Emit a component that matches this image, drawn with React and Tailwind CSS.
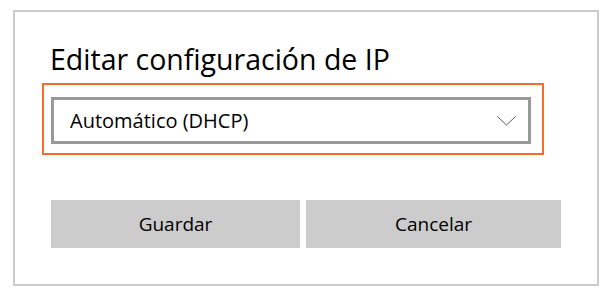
import React from "react";

const font = { fontFamily: '"Open Sans", "Noto Sans", sans-serif' };

const App = () => {
    return (
        <div className="w-[615px] h-[300px] bg-white pt-[10px] pl-[13px] text-black" style={font}>
            {/* Dialog frame */}
            <div className="w-[586px] h-[276px] border-2 border-[#cccccc] flex flex-col">
                <h1 className="ml-[35px] mt-[29px] text-[28.5px] leading-[36px] font-normal whitespace-nowrap">
                    Editar configuración de IP
                </h1>

                {/* Highlighted combo box */}
                <div className="ml-[27px] mt-[6px] w-[502px] h-[72px] border-2 border-[#f76b2d] pl-[7px] pt-[12px]">
                    <div className="w-[480px] h-[47px] border-[3px] border-[#999999] flex items-center justify-between pl-[16px] pr-[12px]">
                        <span className="text-[20px] leading-[24px]">Automático (DHCP)</span>
                        <svg width="19" height="10" viewBox="0 0 19 10" fill="none">
                            <polyline points="0.5,0.5 9.5,9 18.5,0.5" stroke="#444444" strokeWidth="0.9" />
                        </svg>
                    </div>
                </div>

                {/* Buttons */}
                <div className="ml-[36px] mt-[45px] flex gap-[6px]">
                    <button className="w-[249px] h-[48px] bg-[#cccccc] text-[19px] leading-[24px]">Guardar</button>
                    <button className="w-[255px] h-[48px] bg-[#cccccc] text-[19px] leading-[24px]">Cancelar</button>
                </div>
            </div>
        </div>
    );
};

export default App;
